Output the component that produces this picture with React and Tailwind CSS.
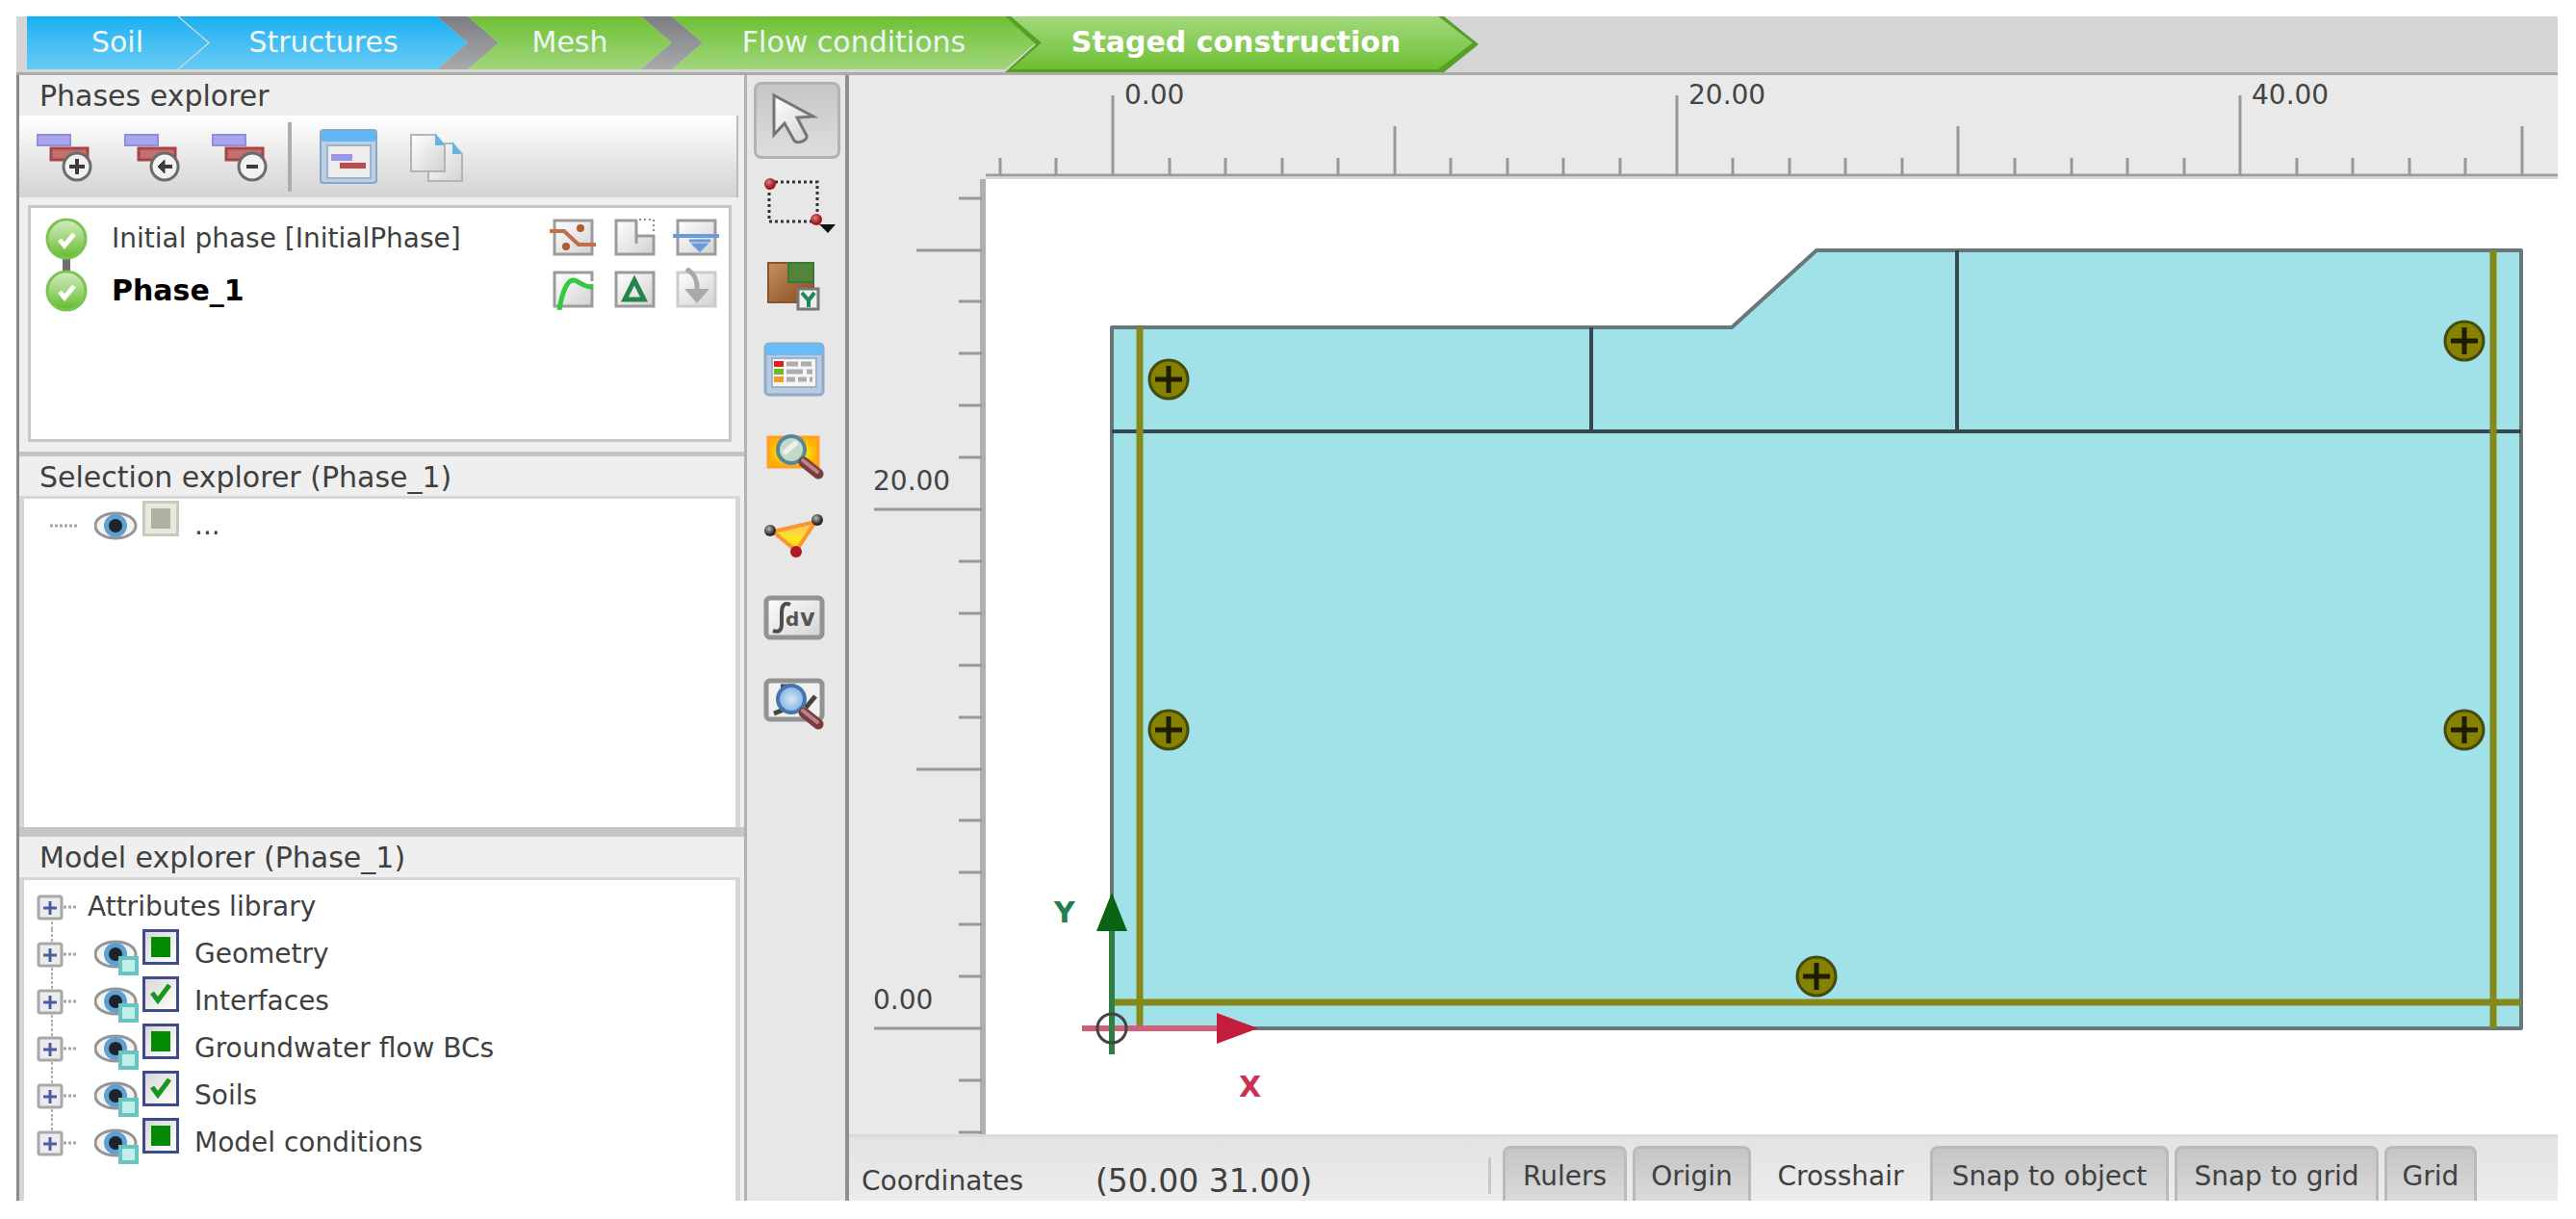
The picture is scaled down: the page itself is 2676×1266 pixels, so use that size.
import React, { useState } from 'react';

const STEPS = [
  { name: 'Soil', style: 'w-[188px] from-[#0fb0f2] to-[#64cbf5] [clip-path:polygon(0_0,calc(100%-32px)_0,100%_50%,calc(100%-32px)_100%,0_100%)]' },
  { name: 'Structures', style: 'w-[300px] -ml-[30px] from-[#0fb0f2] to-[#64cbf5] [clip-path:polygon(0_0,calc(100%-32px)_0,100%_50%,calc(100%-32px)_100%,0_100%,32px_50%)]' },
  { name: 'Mesh', gap: true, style: 'w-[212px] -ml-8 from-[#6dc02f] to-[#a0d679] [clip-path:polygon(0_0,calc(100%-32px)_0,100%_50%,calc(100%-32px)_100%,0_100%,32px_50%)]' },
  { name: 'Flow conditions', gap: true, style: 'w-[378px] -ml-8 from-[#6dc02f] to-[#a0d679] [clip-path:polygon(0_0,calc(100%-32px)_0,100%_50%,calc(100%-32px)_100%,0_100%,32px_50%)]' },
];

const MODEL_ITEMS = [
  { name: 'Geometry', partial: true },
  { name: 'Interfaces' },
  { name: 'Groundwater flow BCs', partial: true },
  { name: 'Soils' },
  { name: 'Model conditions', partial: true },
];

const SNAP_OPTIONS = [
  { name: 'Rulers', on: true, style: 'w-[129px]' },
  { name: 'Origin', on: true, style: 'w-[123px]' },
  { name: 'Crosshair', on: false, style: 'w-[174px]' },
  { name: 'Snap to object', on: true, style: 'w-[248px]' },
  { name: 'Snap to grid', on: true, style: 'w-[212px]' },
  { name: 'Grid', on: true, style: 'w-[96px]' },
];

// model units -> canvas pixels
const px = (x) => Math.round(131 + x * 29.28);
const py = (y) => Math.round(882 - y * 26.95);

const range = (from, to, step) => {
  const out = [];
  for (let i = from; i <= to; i += step) out.push(i);
  return out;
};

const Gradients = () => (
  <svg className="absolute w-0 h-0" aria-hidden="true">
    <defs>
      <linearGradient id="paper" x1="0" y1="0" x2="1" y2="1">
        <stop offset="0" stopColor="#ffffff" />
        <stop offset="1" stopColor="#d2d2d2" />
      </linearGradient>
      <linearGradient id="ball" x1="0" y1="0" x2="0" y2="1">
        <stop offset="0" stopColor="#d3ecc0" />
        <stop offset="0.5" stopColor="#9fd67a" />
        <stop offset="1" stopColor="#5fbb2b" />
      </linearGradient>
      <linearGradient id="soil" x1="0" y1="0" x2="1" y2="1">
        <stop offset="0" stopColor="#c39260" />
        <stop offset="1" stopColor="#87481d" />
      </linearGradient>
      <radialGradient id="amber">
        <stop offset="0" stopColor="#ff9a10" />
        <stop offset="0.5" stopColor="#ffe000" />
        <stop offset="1" stopColor="#ffb000" />
      </radialGradient>
      <linearGradient id="yellow" x1="0" y1="0" x2="0" y2="1">
        <stop offset="0" stopColor="#ffb870" />
        <stop offset="0.6" stopColor="#ffe820" />
        <stop offset="1" stopColor="#ffc020" />
      </linearGradient>
      <radialGradient id="lens">
        <stop offset="0" stopColor="#d6e8fa" />
        <stop offset="1" stopColor="#7fb0e2" />
      </radialGradient>
      <radialGradient id="dark" cx="0.4" cy="0.35">
        <stop offset="0" stopColor="#bbbbbb" />
        <stop offset="1" stopColor="#2a2a2a" />
      </radialGradient>
      <radialGradient id="red" cx="0.4" cy="0.35">
        <stop offset="0" stopColor="#d98080" />
        <stop offset="1" stopColor="#a3161f" />
      </radialGradient>
    </defs>
  </svg>
);

const StepBar = () => (
  <nav className="flex h-[61px] shrink-0 pl-[11px] bg-[#d5d5d5] border-b-[3px] border-[#abaca7] text-[30px] text-[#eef7f4]">
    {STEPS.map((s) => (
      <React.Fragment key={s.name}>
        {s.gap && (
          <span className="w-[64px] h-[55px] shrink-0 -ml-8 bg-linear-to-b from-[#7d7e82] to-[#a9aaac] [clip-path:polygon(0_0,50%_0,100%_50%,50%_100%,0_100%,50%_50%)]" />
        )}
        <button className={`h-[55px] shrink-0 pb-[2px] bg-linear-to-b ${s.style}`}>{s.name}</button>
      </React.Fragment>
    ))}
    <div className="w-[492px] h-[58px] shrink-0 -ml-8 pb-[3px] bg-[#57a028] [clip-path:polygon(0_0,calc(100%-36px)_0,100%_50%,calc(100%-36px)_100%,0_100%,32px_50%)]">
      <button
        aria-current="step"
        className="w-full h-full pb-[2px] pr-3 font-bold text-white bg-linear-to-b from-[#a3d87c] to-[#6cc02d] [clip-path:polygon(6px_0,calc(100%-42px)_0,calc(100%-6px)_50%,calc(100%-42px)_100%,6px_100%,38px_50%)]"
      >
        Staged construction
      </button>
    </div>
  </nav>
);

const PhaseIcon = ({ children }) => (
  <svg viewBox="0 0 58 60" className="w-[58px] h-[60px]">
    <rect x="1" y="7" width="34" height="11" fill="#aaa6ee" stroke="#918de0" strokeWidth="2" />
    <rect x="15" y="21" width="38" height="12" fill="#c16f6f" stroke="#a94444" strokeWidth="3" />
    <circle cx="42" cy="40" r="14" fill="#f2f2f2" stroke="#6c6c6c" strokeWidth="3" />
    <g stroke="#3c3c3c" strokeWidth="4" fill="none">{children}</g>
  </svg>
);

const PhasesToolbar = () => (
  <div className="flex items-center h-[85px] pl-[18px] bg-linear-to-b from-white to-[#d3d3d3] border-r-2 border-[#bbb] mr-[6px]">
    <button aria-label="Add phase"><PhaseIcon><path d="M34 40h16M42 32v16" /></PhaseIcon></button>
    <button aria-label="Insert phase" className="ml-[33px]">
      <PhaseIcon><path d="M37 40h13" /><path d="M42 33l-7 7 7 7z" fill="#3c3c3c" strokeWidth="1" /></PhaseIcon>
    </button>
    <button aria-label="Delete phase" className="ml-[33px]"><PhaseIcon><path d="M36 40h12" /></PhaseIcon></button>
    <span className="w-1 h-[72px] ml-[21px] bg-[#adadad]" />
    <button aria-label="Edit phase" className="ml-[29px]">
      <svg viewBox="0 0 60 60" className="w-[60px] h-[60px]">
        <rect x="1" y="2" width="58" height="55" rx="3" fill="#bccfe4" stroke="#86a8c6" strokeWidth="2" />
        <rect x="2" y="3" width="56" height="11" rx="2" fill="#62b8f5" />
        <rect x="8" y="18" width="45" height="34" fill="#ededed" stroke="#9fb3c8" strokeWidth="2" />
        <rect x="12" y="27" width="22" height="7" fill="#9a95e6" />
        <rect x="21" y="36" width="27" height="6" fill="#bc4b4b" />
      </svg>
    </button>
    <button aria-label="Copy" className="ml-[34px]">
      <svg viewBox="0 0 56 60" className="w-14 h-[60px]">
        <path d="M19 16h25l10 11v28H19z" fill="url(#paper)" stroke="#b4b4b4" strokeWidth="2" />
        <path d="M44 14v13h10z" fill="#66b4e6" />
        <path d="M1 7h25l10 11v27H1z" fill="url(#paper)" stroke="#b4b4b4" strokeWidth="2" />
        <path d="M26 5v13h10z" fill="#66b4e6" />
      </svg>
    </button>
  </div>
);

const Box = ({ children, faded }) => (
  <svg viewBox="0 0 48 48" className="w-12 h-12">
    <rect x="5" y="5" width="39" height="35" fill="url(#paper)" stroke={faded ? '#cccccc' : '#9b9b9b'} strokeWidth="3" />
    {children}
  </svg>
);

const PhaseRow = ({ name, current, children }) => (
  <li className="flex items-center h-[54px]">
    <svg viewBox="0 0 44 54" className="w-11 h-[54px]">
      <rect x="18" y={current ? 0 : 30} width="8" height="24" fill="#6e6e6e" />
      <circle cx="22" cy="27" r="20" fill="url(#ball)" stroke="#7cc450" strokeWidth="3" />
      <path d="M15 28l5 6 10-12" fill="none" stroke="white" strokeWidth="5" />
    </svg>
    <span className={current ? 'ml-[25px] text-[30px] font-bold text-black' : 'ml-[25px]'}>{name}</span>
    <div className="flex gap-4 ml-auto">{children}</div>
  </li>
);

const Phases = () => (
  <section className="shrink-0 pb-[10px] border-b-[5px] border-[#c4c4c4]">
    <h2 className="h-[42px] pl-[21px] text-[30px] leading-[44px]">Phases explorer</h2>
    <PhasesToolbar />
    <ul className="h-[246px] mt-2 ml-[9px] mr-[13px] pt-[5px] pl-[15px] pr-[10px] bg-white border-3 border-[#c6c6cd]">
      <PhaseRow name="Initial phase [InitialPhase]">
        <Box>
          <path d="M0 16h15l15 14h18" fill="none" stroke="#c07048" strokeWidth="4" />
          <circle cx="32" cy="13" r="4" fill="#b05a30" />
          <circle cx="17" cy="32" r="4" fill="#b05a30" />
        </Box>
        <Box>
          <rect x="27" y="2" width="19" height="18" fill="white" />
          <path d="M26 5v24M27 21h18" stroke="#9b9b9b" strokeWidth="3" />
          <path d="M29 4h15v15" fill="none" stroke="#8a8a8a" strokeWidth="2" strokeDasharray="2 3" />
        </Box>
        <Box>
          <path d="M0 21h48" stroke="#6c98dc" strokeWidth="4" />
          <path d="M17 26h22M22 30h12l-6 6z" stroke="#6c98dc" fill="#6c98dc" strokeWidth="3" />
        </Box>
      </PhaseRow>
      <PhaseRow name="Phase_1" current>
        <Box>
          <path d="M26 2h20v15H26z" fill="white" />
          <path d="M26 5h18v9" fill="none" stroke="#9b9b9b" strokeWidth="3" />
          <path d="M10 44C13 24 19 12 25 13s10 8 20 7" fill="none" stroke="#35c845" strokeWidth="5" />
        </Box>
        <Box><path d="M24 13L14 33h20z" fill="none" stroke="#23854a" strokeWidth="5" /></Box>
        <Box faded>
          <path d="M14 1c10 6 12 14 11 24" fill="none" stroke="#a9a9a9" strokeWidth="5" />
          <path d="M12 22h26L25 37z" fill="#a9a9a9" />
        </Box>
      </PhaseRow>
    </ul>
  </section>
);

const Expander = ({ leaf, first, last }) => (
  <svg viewBox="0 0 46 49" className="w-[46px] h-[49px] shrink-0">
    {!leaf && <path d={`M16 ${first ? 26 : 0}V${last ? 26 : 49}`} stroke="#b0b0b0" strokeWidth="2" strokeDasharray="3 2" />}
    <path d={leaf ? 'M14 26h28' : 'M28 26h14'} stroke="#a5a5a5" strokeWidth="3" strokeDasharray="3 2" />
    {!leaf && (
      <>
        <rect x="2" y="15" width="24" height="23" rx="2" fill="#ececec" stroke="#a8a8a8" strokeWidth="3" />
        <path d="M7 27h14M14 20v14" stroke="#4a5ca8" strokeWidth="3" />
      </>
    )}
  </svg>
);

const Eye = ({ page }) => (
  <svg viewBox="0 0 47 49" className="w-[47px] h-[49px] shrink-0 ml-[14px]">
    <ellipse cx="22" cy="26" rx="21" ry="13" fill="#f4f4f4" stroke="#959595" strokeWidth="3" />
    <circle cx="22" cy="26" r="12" fill="#5fa0d2" />
    <circle cx="22" cy="26" r="7" fill="#1c232b" />
    {page && <rect x="27" y="30" width="17" height="16" fill="#c2eeea" stroke="#67c4c0" strokeWidth="4" />}
  </svg>
);

const TreeItem = ({ item, last }) => (
  <li className="flex items-center h-[49px]">
    <Expander leaf={item.disabled} last={last} />
    <Eye page={!item.disabled} />
    <label className="flex self-stretch items-center">
      <span className="relative self-start ml-[3px]">
        <input
          type="checkbox"
          defaultChecked={!item.disabled}
          disabled={item.disabled}
          className={`block appearance-none w-[38px] h-[37px] border-3 ${item.disabled ? 'bg-[#e8e8dc] border-[#c9c9bc]' : 'bg-linear-to-br from-[#d8d8d8] to-white border-[#3d4b89]'}`}
        />
        <svg viewBox="0 0 38 37" className="absolute inset-0 pointer-events-none">
          {item.disabled || item.partial ? (
            <rect x="9" y="8" width="20" height="21" fill={item.disabled ? '#b0b0a3' : '#048a04'} />
          ) : (
            <path d="M10 17l6 8 12-16" fill="none" stroke="#17981b" strokeWidth="5" />
          )}
        </svg>
      </span>
      <span className="ml-4 pt-[2px]">{item.name}</span>
    </label>
  </li>
);

const Explorers = () => (
  <div className="flex flex-col w-[756px] shrink-0 bg-[#efefef] border-l-3 border-[#8a8a8a]">
    <Phases />
    <section className="shrink-0">
      <h2 className="h-[41px] pl-[21px] text-[30px] leading-[43px]">Selection explorer (Phase_1)</h2>
      <ul className="h-[344px] mr-1 pt-[2px] pl-[13px] bg-white border-t-3 border-x-5 border-[#d6d6da]">
        <TreeItem item={{ name: '...', disabled: true }} />
      </ul>
    </section>
    <section className="flex flex-col flex-1 min-h-0 border-t-[10px] border-[#c6c6c6]">
      <h2 className="h-[42px] shrink-0 pl-[21px] text-[30px] leading-[44px]">Model explorer (Phase_1)</h2>
      <ul className="flex-1 mr-1 pt-[2px] pl-[13px] bg-white border-t-3 border-x-5 border-[#d6d6da]">
        <li className="flex items-center h-[49px]">
          <Expander first />
          <span className="ml-[7px] pt-[2px]">Attributes library</span>
        </li>
        {MODEL_ITEMS.map((item, i) => (
          <TreeItem key={item.name} item={item} last={i === MODEL_ITEMS.length - 1} />
        ))}
      </ul>
    </section>
  </div>
);

const Tool = ({ label, active, children }) => (
  <button
    aria-label={label}
    aria-pressed={!!active}
    className={`w-[90px] h-20 rounded-lg border-3 ${active ? 'bg-linear-to-b from-[#c6c6c6] to-[#dedede] border-[#b2b2b2]' : 'border-transparent'}`}
  >
    <svg viewBox="3 3 84 74" className="w-full h-full overflow-visible">{children}</svg>
  </button>
);

const Handle = ({ y }) => (
  <>
    <path d={`M52 ${y}l15 12`} stroke="#7a3d40" strokeWidth="11" strokeLinecap="round" />
    <path d={`M51 ${y - 2}l15 12`} stroke="#b98589" strokeWidth="4" strokeLinecap="round" />
  </>
);

const Tools = () => (
  <aside className="flex flex-col gap-[6px] w-[109px] shrink-0 pt-[7px] pl-[7px] bg-[#e7e7e7] border-l-3 border-l-[#b3b3b3] border-r-4 border-r-[#8f8f8f]">
    <Tool label="Select" active>
      <path d="M21 14v41l11-12 10 18c3 4 14 0 13-5L45 37l17-1z" fill="url(#paper)" stroke="#757575" strokeWidth="3" />
    </Tool>
    <Tool label="Select rectangle">
      <rect x="16" y="18" width="50" height="41" fill="none" stroke="#333" strokeWidth="3" strokeDasharray="3 3" />
      <circle cx="17" cy="20" r="6" fill="url(#red)" />
      <circle cx="65" cy="57" r="6" fill="url(#red)" />
      <path d="M68 62h17l-8 9z" fill="#111" />
    </Tool>
    <Tool label="Show materials">
      <rect x="15" y="16" width="47" height="41" fill="url(#soil)" stroke="#8c5230" strokeWidth="2" />
      <rect x="36" y="16" width="26" height="20" fill="#54843a" stroke="#37793a" strokeWidth="2" />
      <rect x="46" y="43" width="21" height="21" fill="#eee" stroke="#777" strokeWidth="3" />
      <path d="M50 47l7 8 6-8M57 54v8" stroke="#23855a" strokeWidth="4" fill="none" />
    </Tool>
    <Tool label="Phase settings">
      <rect x="12" y="14" width="60" height="53" rx="4" fill="#b9cae3" stroke="#90abc8" strokeWidth="3" />
      <rect x="12" y="14" width="60" height="12" rx="3" fill="#68bdf7" />
      <rect x="19" y="29" width="46" height="30" fill="#f5f5f5" stroke="#a1b3c9" strokeWidth="2" />
      <path d="M21 35h10" stroke="#de2020" strokeWidth="6" />
      <path d="M21 43h10" stroke="#65bd20" strokeWidth="6" />
      <path d="M21 51h10" stroke="#ee9c24" strokeWidth="6" />
      <path d="M34 35h12m3 0h11M34 43h17m4 0h6M34 51h9m3 0h9m3 0h3" stroke="#adadad" strokeWidth="5" />
    </Tool>
    <Tool label="Preview">
      <rect x="15" y="25" width="52" height="31" fill="url(#amber)" stroke="#ff9f2a" strokeWidth="3" />
      <circle cx="39" cy="38" r="14" fill="#c4d9cb" stroke="#568798" strokeWidth="4" />
      <path d="M31 42l14-12" stroke="#edf4e6" strokeWidth="5" />
      <Handle y={51} />
    </Tool>
    <Tool label="Select points for curves">
      <path d="M20 37l44-10-20 30z" fill="url(#yellow)" stroke="#f89630" strokeWidth="4" />
      <circle cx="17" cy="36" r="6" fill="url(#dark)" />
      <circle cx="66" cy="25" r="6" fill="url(#dark)" />
      <circle cx="44" cy="58" r="6" fill="#b01824" />
    </Tool>
    <Tool label="Integrate">
      <rect x="13" y="20" width="58" height="41" rx="4" fill="url(#paper)" stroke="#939393" strokeWidth="5" />
      <path d="M38 27c-7-3-9 2-9 8v12c0 7-3 9-9 7" fill="none" stroke="#4d4d4d" strokeWidth="4" />
      <text x="33" y="49" fontSize="20" fontWeight="bold" fill="#555">d</text>
      <text x="48" y="49" fontSize="24" fontWeight="bold" fill="#555">v</text>
    </Tool>
    <Tool label="Inspect">
      <rect x="13" y="20" width="58" height="40" rx="4" fill="#f1f1f1" stroke="#939393" strokeWidth="5" />
      <path d="M21 54l10-4M54 48l10-12M28 26h14" stroke="#444" strokeWidth="5" />
      <circle cx="39" cy="39" r="14" fill="url(#lens)" stroke="#4676ad" strokeWidth="4" />
      <Handle y={53} />
    </Tool>
  </aside>
);

const TopRuler = () => (
  <svg className="col-start-2 w-full h-[108px] bg-[#e9e9e9]">
    <path d="M0 104h4000" stroke="#9c9c9c" strokeWidth="3" />
    <path d="M0 107h4000" stroke="#dadada" strokeWidth="3" />
    {range(-4, 50, 2).map((u) => {
      const x = px(u) + 1;
      const top = u % 20 === 0 ? 21 : u % 10 === 0 ? 53 : 86;
      return <path key={u} d={`M${x} ${top}V104`} stroke="#989898" strokeWidth="3" />;
    })}
    {[0, 20, 40].map((u) => (
      <text key={u} x={px(u) + 13} y="30" className="fill-[#444]">{u.toFixed(2)}</text>
    ))}
  </svg>
);

const SideRuler = () => (
  <svg className="w-[142px] h-full bg-[#e9e9e9]">
    <path d="M139 0v4000" stroke="#b0b0b0" strokeWidth="6" />
    {range(-4, 32, 2).map((u) => {
      const left = u % 20 === 0 ? 26 : u % 10 === 0 ? 70 : 114;
      return <path key={u} d={`M${left} ${py(u)}H138`} stroke="#989898" strokeWidth="3" />;
    })}
    {[0, 20].map((u) => (
      <text key={u} x="25" y={py(u) - 20} className="fill-[#444]">{u.toFixed(2)}</text>
    ))}
  </svg>
);

const Fixity = ({ x, y }) => (
  <g transform={`translate(${px(x)} ${py(y)})`}>
    <circle r="20" fill="#858200" stroke="#454a10" strokeWidth="3" />
    <path d="M-14 0h28M0-14v28" stroke="#1d1b00" strokeWidth="5" />
  </g>
);

const ModelView = () => (
  <svg className="w-full h-full bg-white">
    <path
      d={`M${px(0)} ${py(0)}V${py(27)}H${px(22)}L${px(25)} ${py(30)}H${px(50)}V${py(0)}z`}
      fill="#a0e2e7"
      stroke="#68777a"
      strokeWidth="4"
      strokeLinejoin="round"
    />
    <path
      d={`M${px(0)} ${py(23)}H${px(50)}M${px(17)} ${py(27)}V${py(23)}M${px(30)} ${py(30)}V${py(23)}`}
      stroke="#35484b"
      strokeWidth="4"
    />
    <path
      d={`M${px(1)} ${py(27)}V${py(0)}M${px(49)} ${py(30)}V${py(0)}M${px(0)} ${py(1)}H${px(50)}`}
      stroke="#85891a"
      strokeWidth="7"
    />
    <Fixity x={2} y={25} />
    <Fixity x={48} y={26.5} />
    <Fixity x={2} y={11.5} />
    <Fixity x={48} y={11.5} />
    <Fixity x={25} y={2} />

    <path d="M100 882h145" stroke="#d0607a" strokeWidth="6" />
    <path d="M240 866v32l43-16z" fill="#c41e3f" />
    <path d="M131 909V780" stroke="#2f7f42" strokeWidth="6" />
    <path d="M115 781h32l-16-40z" fill="#0b6414" />
    <circle cx="131" cy="882" r="15" fill="none" stroke="#444" strokeWidth="3" />
    <text x="71" y="772" className="text-[30px] font-bold fill-[#1f7f4f]">Y</text>
    <text x="263" y="953" className="text-[30px] font-bold fill-[#cc3350]">X</text>
  </svg>
);

const StatusBar = () => {
  const [options, setOptions] = useState(SNAP_OPTIONS);

  const toggle = (name) =>
    setOptions(options.map((o) => (o.name === name ? { ...o, on: !o.on } : o)));

  return (
    <footer className="col-span-2 flex h-[69px] overflow-hidden bg-linear-to-b from-[#e3e3e3] to-[#ececec] border-t-3 border-[#dadada]">
      <span className="w-[242px] shrink-0 pt-[22px] pl-[13px] leading-[48px]">Coordinates</span>
      <output className="w-[422px] shrink-0 pl-[14px] pt-[22px] text-[33px] leading-[48px]">(50.00 31.00)</output>
      <span className="w-[3px] h-[38px] mt-[21px] shrink-0 bg-[#c9c9bf]" />
      <div className="flex gap-[6px] pt-[9px] pl-[12px]">
        {options.map((o) => (
          <button
            key={o.name}
            aria-pressed={o.on}
            onClick={() => toggle(o.name)}
            className={`h-[70px] pb-[6px] shrink-0 rounded-lg border-3 ${o.style} ${o.on ? 'bg-linear-to-b from-[#c5c5c5] to-[#dedede] border-[#bababa]' : 'border-transparent'}`}
          >
            {o.name}
          </button>
        ))}
      </div>
    </footer>
  );
};

const App = () => (
  <div className="flex flex-col h-screen pt-[17px] pl-[17px] pr-[19px] pb-[19px] overflow-hidden bg-white font-['DejaVu_Sans',sans-serif] text-[28px] leading-9 text-[#404040] whitespace-nowrap">
    <Gradients />
    <StepBar />
    <div className="flex flex-1 min-h-0">
      <Explorers />
      <Tools />
      <main className="grid flex-1 min-w-0 grid-cols-[142px_1fr] grid-rows-[108px_1fr_69px] bg-[#e9e9e9]">
        <TopRuler />
        <SideRuler />
        <ModelView />
        <StatusBar />
      </main>
    </div>
  </div>
);

export default App;
